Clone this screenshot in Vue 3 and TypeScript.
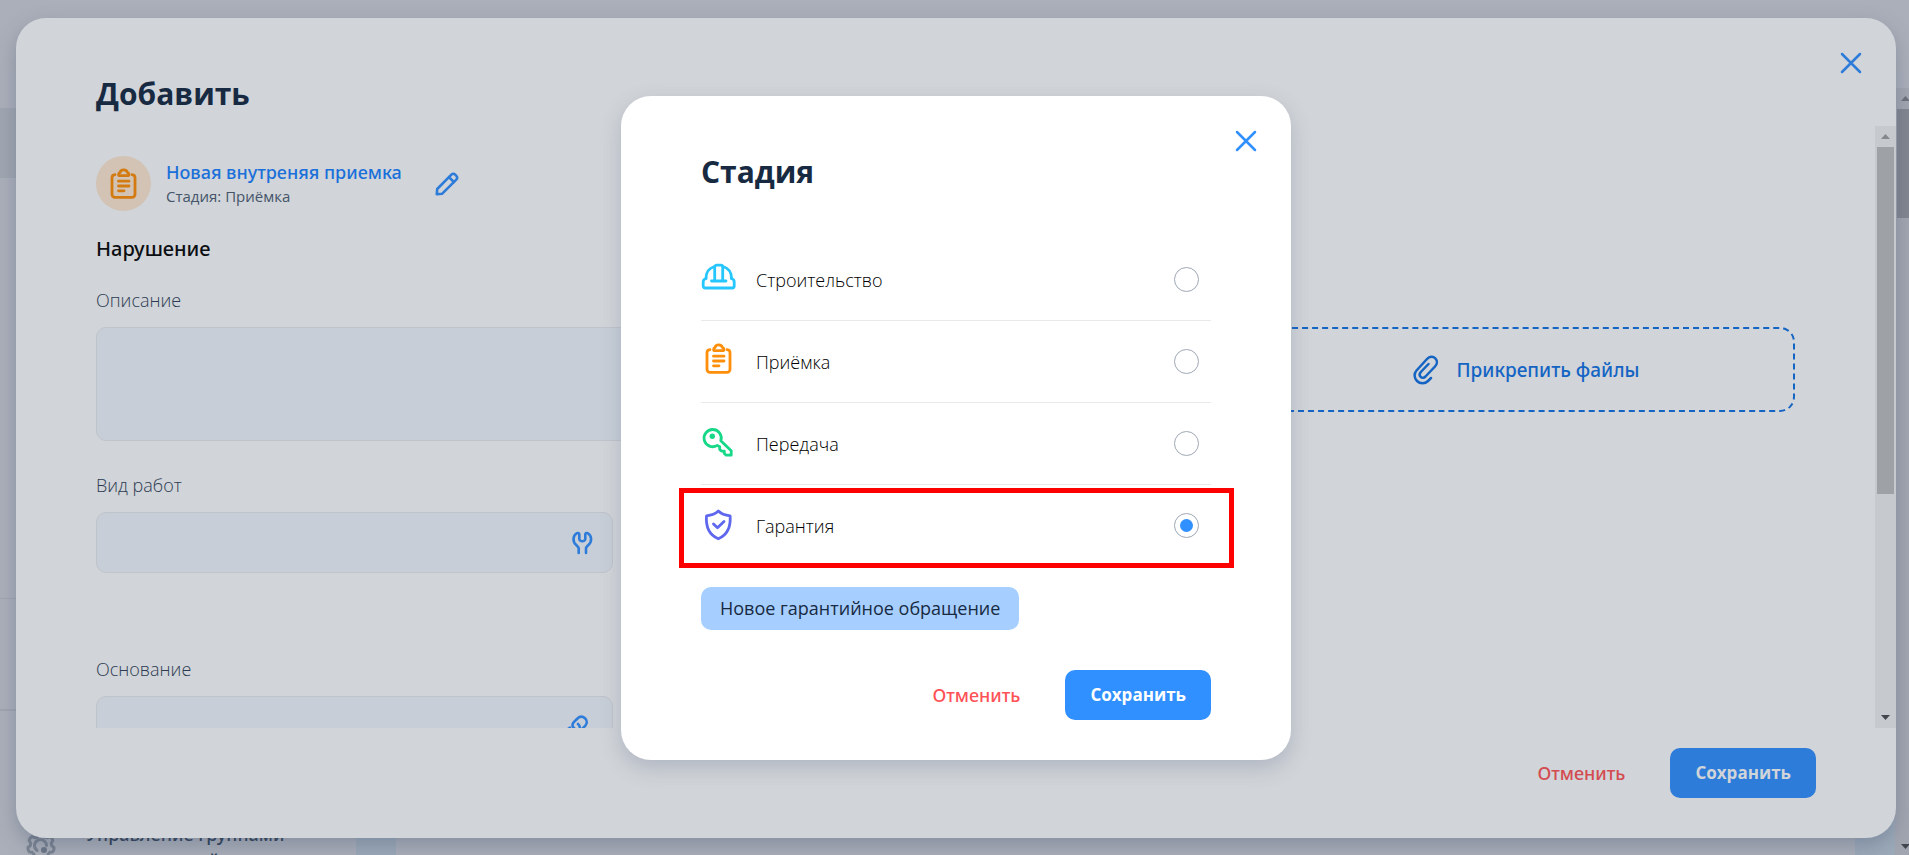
<script setup lang="ts">
import { ref } from 'vue'

interface Stage {
  id: string
  label: string
}

const stages: Stage[] = [
  { id: 'build', label: 'Строительство' },
  { id: 'accept', label: 'Приёмка' },
  { id: 'transfer', label: 'Передача' },
  { id: 'warranty', label: 'Гарантия' },
]

const selected = ref<string>('warranty')
const description = ref<string>('')
const workType = ref<string>('')
const basis = ref<string>('')
</script>

<template>
  <div class="page">
    <div class="backdrop-page">
      <div class="topbar"></div>
      <div class="workspace">
        <nav class="sidebar">
          <div class="side-active"></div>
          <div class="side-group"></div>
          <div class="side-group short"></div>
          <div class="side-item">
            <svg class="gear" viewBox="0 0 30 30" fill="none" stroke="#7a8391" stroke-width="3">
              <path d="M12.500 2.500c1.500-1 3.500-1 5 0l1 2.800 3 .4 2.600-1.200c1.500 1 2.500 2.500 2.700 4.200l-1.600 2.500.6 2.600 2.200 1.700c.2 1.700-.4 3.400-1.500 4.600l-2.800.2-1.800 2.300.3 2.800c-1.300 1.200-3 1.600-4.700 1.300L15 24.500l-2.500 2.200c-1.700.3-3.400-.1-4.700-1.300l.3-2.800-1.800-2.300-2.800-.2C2.400 18.900 1.800 17.200 2 15.500l2.200-1.700.6-2.600L3.200 8.700c.2-1.700 1.200-3.200 2.700-4.200l2.600 1.200 3-.4z" />
              <path d="M11 18.500a6 6 0 1 1 9.500-5" />
              <circle cx="18" cy="18" r="3" fill="#6c7687" stroke="none" />
            </svg>
            <span>Управление группами<br />пользователей</span>
          </div>
        </nav>
        <div class="board"></div>
        <div class="scrollbar page-scroll" aria-hidden="true">
          <i class="arrow up"></i>
          <div class="track"><div class="thumb small"></div></div>
          <i class="arrow down"></i>
        </div>
      </div>
    </div>

    <div class="layer">
      <section class="dialog main-dialog" role="dialog" aria-labelledby="add-title">
        <button class="close" type="button" aria-label="Закрыть">
          <svg viewBox="0 0 22 22"><path d="M2 2l18 18M20 2L2 20" /></svg>
        </button>
        <h1 id="add-title" class="main-title">Добавить</h1>

        <div class="scroll-area">
          <form class="form" @submit.prevent>
            <div class="subject">
              <span class="subject-badge">
                <svg viewBox="0 0 36 36" class="stroke">
                  <path d="M9 8.700c-2 .2-3 1.200-3 3v16.600a3 3 0 0 0 3 3h17a3 3 0 0 0 3-3V11.700c0-1.800-1-2.800-3-3" />
                  <path d="M14 9.700h7.500c.9 0 1.400-.5 1.400-1.300 0-1-.6-1.700-1.500-1.900-.4-1.600-1.800-2.600-3.700-2.600s-3.300 1-3.600 2.600c-.9.2-1.500.9-1.500 1.900 0 .8.5 1.300 1.400 1.300z" />
                  <path d="M12.500 15.200H23M12.500 20H23M12.500 24.800H18" />
                </svg>
              </span>
              <div class="subject-text">
                <a href="#" class="subject-link">Новая внутреняя приемка</a>
                <span class="subject-stage">Стадия: Приёмка</span>
              </div>
              <button class="edit" type="button" aria-label="Изменить">
                <svg viewBox="0 0 24 24">
                  <path d="M1.800 22.200L2.200 17 16.400 2.700c1.200-1.200 2.600-1.200 3.800 0l1.100 1.100c1.200 1.200 1.200 2.600 0 3.800L7 21.800z" />
                  <path d="M14 5.200l4.800 4.800" />
                </svg>
              </button>
            </div>

            <h2 class="section-title">Нарушение</h2>

            <div class="fields">
              <div class="field wide">
                <label for="description">Описание</label>
                <textarea id="description" v-model="description" class="box area"></textarea>
              </div>
              <button class="attach" type="button">
                <svg viewBox="0 0 26 30">
                  <path d="M18 23l-3 3c-3 3-8 3-11 0s-3.200-7.500-.5-10.500L14 4c2.500-2.700 6-3 8.300-.7s2 5.700-.3 8.200L12.500 21.500c-1.500 1.500-3.500 1.700-4.900.3-1.300-1.300-1.100-3.300.2-4.800L15.500 9" />
                </svg>
                Прикрепить файлы
              </button>
            </div>

            <div class="fields second">
              <div class="field">
                <label for="work-type">Вид работ</label>
                <div class="box with-icon">
                  <input id="work-type" v-model="workType" type="text" />
                  <svg viewBox="0 0 24 24">
                    <path d="M8.700 22v-4.500c0-1.500-1.200-2.300-2.700-3.700C2.500 10.500 2.600 4.500 7 2.200c1.200-.6 2.300 0 2.300 1.300V8c0 1 1.200 2.200 3 2.200s3-1.200 3-2.200V3.500c0-1.300 1.100-1.900 2.300-1.300 4.400 2.300 4.500 8.300 1 11.600C17.200 15.200 16 16 16 17.500V22" />
                  </svg>
                </div>
              </div>
            </div>

            <div class="fields third">
              <div class="field">
                <label for="basis">Основание</label>
                <div class="box with-icon link-box">
                  <input id="basis" v-model="basis" type="text" />
                  <svg viewBox="0 0 24 24">
                    <path d="M8.500 13.500C6 12 6 9 7.800 7.200l3.700-3.700c2.300-2.300 5.200-2.300 7.500-.2s2.300 5.200.2 7.500L15.500 14.500" />
                    <path d="M12 9c1.800 1.500 2.500 3.500 1.500 6.500l-4.500 5C7 22.500 4 22.500 2 20.500s-2-5 0-6.500l2-1.500" />
                  </svg>
                </div>
              </div>
            </div>
          </form>
          <div class="scrollbar" aria-hidden="true">
            <i class="arrow up"></i>
            <div class="track"><div class="thumb"></div></div>
            <i class="arrow down"></i>
          </div>
        </div>

        <footer class="actions main-actions">
          <button class="cancel" type="button">Отменить</button>
          <button class="save" type="button">Сохранить</button>
        </footer>
      </section>
    </div>

    <div class="layer">
      <section class="dialog stage-dialog" role="dialog" aria-labelledby="stage-title">
        <button class="close" type="button" aria-label="Закрыть">
          <svg viewBox="0 0 22 22"><path d="M2 2l18 18M20 2L2 20" /></svg>
        </button>
        <h2 id="stage-title" class="stage-title">Стадия</h2>

        <div class="stages">
          <label
            v-for="stage in stages"
            :key="stage.id"
            class="stage"
            :class="[stage.id, { marked: stage.id === 'warranty' }]"
          >
            <svg class="stroke" viewBox="0 0 36 36">
              <template v-if="stage.id === 'build'">
                <path d="M5 19.500C5 13 8.500 9 13.500 7.500M30.500 19.500C30.500 13 27 9 22 7.500" />
                <path d="M13.700 22V8.200a2 2 0 0 1 2-2h4a2 2 0 0 1 2 2V22M10.500 22h14.500" />
                <path d="M5 19.500c-2 .5-2.800 1.800-2.800 3.500v4a2 2 0 0 0 2 2h27a2 2 0 0 0 2-2v-4c0-1.700-.8-3-2.700-3.500" />
              </template>
              <template v-else-if="stage.id === 'accept'">
                <path d="M9 8.700c-2 .2-3 1.200-3 3v16.600a3 3 0 0 0 3 3h17a3 3 0 0 0 3-3V11.700c0-1.800-1-2.800-3-3" />
                <path d="M14 9.700h7.500c.9 0 1.400-.5 1.400-1.300 0-1-.6-1.700-1.500-1.900-.4-1.600-1.800-2.600-3.700-2.600s-3.300 1-3.600 2.600c-.9.2-1.500.9-1.500 1.900 0 .8.5 1.300 1.400 1.300z" />
                <path d="M12.500 15.200H23M12.500 20H23M12.500 24.800H18" />
              </template>
              <template v-else-if="stage.id === 'transfer'">
                <path d="M19.800 17.800l10.400 10v4.400h-5l-1.900-1.700v-2.300h-2.600l-2-1.800v-2.600l-2.500-1.400A8.600 8.600 0 1 1 19.800 17.800z" />
                <circle cx="11.300" cy="13.300" r="2.700" fill="currentColor" stroke="none" />
              </template>
              <template v-else>
                <path d="M17.300 6c-3.300 3.200-7.300 4.300-11.800 4.800C4.700 21 7.500 29.500 17.300 33.800 27 29.500 29.900 21 29.100 10.800 24.600 10.300 20.500 9.200 17.300 6z" />
                <path d="M12.500 19l4 3.700 6.500-6.200" />
              </template>
            </svg>
            <span class="stage-name">{{ stage.label }}</span>
            <input v-model="selected" type="radio" name="stage" :value="stage.id" />
          </label>
        </div>

        <span class="tag">Новое гарантийное обращение</span>

        <footer class="actions">
          <button class="cancel" type="button">Отменить</button>
          <button class="save" type="button">Сохранить</button>
        </footer>
      </section>
    </div>
  </div>
</template>

<style>
body {
  margin: 0;
  overflow: hidden;
}
</style>

<style scoped>
* {
  box-sizing: border-box;
}

.page {
  position: relative;
  height: 100vh;
  overflow: hidden;
  font-family: "Open Sans", "Noto Sans", sans-serif;
  font-size: 18px;
  line-height: 24px;
  background: #abafb9;
}

button,
input,
textarea {
  font: inherit;
  border: 0;
  padding: 0;
  margin: 0;
  background: none;
  outline: none;
}

button {
  cursor: pointer;
}

svg {
  display: block;
  flex: none;
  fill: none;
  stroke-linecap: round;
  stroke-linejoin: round;
}

/* Page behind the dialogs */
.backdrop-page {
  display: flex;
  flex-direction: column;
  height: 100%;
}

.topbar {
  height: 88px;
  flex: none;
}

.workspace {
  display: flex;
  flex: 1;
  min-height: 0;
  margin-right: -7px;
  background: #9daab9;
}

.sidebar {
  width: 356px;
  flex: none;
  padding-top: 20px;
  overflow: hidden;
  background: #abafb9;
}

.side-active {
  height: 70px;
  background: #a0a6b0;
}

.side-group {
  height: 421px;
  border-bottom: 1px solid #a0a4ae;
}

.side-group.short {
  height: 112px;
  border-bottom-width: 2px;
}

.side-item {
  display: flex;
  align-items: center;
  gap: 30px;
  margin-top: 110px;
  padding-left: 26px;
  line-height: 26px;
  font-family: "Noto Sans", sans-serif;
  font-weight: 500;
  color: #2f3f56;
}

.gear {
  width: 30px;
  height: 30px;
}

.board {
  flex: 1;
  margin: 0 40px;
  background: #abafb9;
}

/* Scroll bars */
.scrollbar {
  display: flex;
  flex-direction: column;
  width: 21px;
  flex: none;
  background: #c6c9cd;
}

.page-scroll {
  background: #a2a6b0;
}

.arrow {
  width: 9px;
  height: 5px;
  margin: 8px auto;
  background: #85888d;
}

.arrow.up {
  clip-path: polygon(50% 0, 100% 100%, 0 100%);
}

.arrow.down {
  background: #43474d;
  clip-path: polygon(0 0, 100% 0, 50% 100%);
}

.page-scroll .arrow.up {
  background: #6d717b;
}

.page-scroll .arrow.down {
  margin-bottom: 6px;
}

.track {
  flex: 1;
  padding: 0 2px;
}

.thumb {
  height: 62%;
  background: #9ea1a5;
}

.thumb.small {
  height: 15%;
  background: #828690;
}

/* Dialogs */
.layer {
  position: absolute;
  inset: 0;
  display: grid;
  grid-template-rows: minmax(0, 1fr);
  place-items: center;
  padding: 18px 13px 17px 16px;
}

.dialog {
  position: relative;
  display: flex;
  flex-direction: column;
  border-radius: 30px;
}

.main-dialog {
  width: 100%;
  height: 100%;
  background: #d1d4d8;
  box-shadow: 0 8px 20px rgba(70, 85, 115, 0.35);
}

.close {
  position: absolute;
  top: 34px;
  right: 34px;
  width: 22px;
  height: 22px;
  color: #3090ff;
}

.close svg {
  width: 22px;
  height: 22px;
  stroke: currentColor;
  stroke-width: 2.500;
}

.main-dialog .close {
  color: #2d7cda;
}

h1,
h2 {
  margin: 0;
  color: #172a42;
}

.main-title,
.stage-title {
  font-size: 30px;
  line-height: 40px;
  font-weight: 700;
}

.main-title {
  padding: 56px 80px 12px;
}

.scroll-area {
  display: flex;
  flex: 1;
  min-height: 0;
  overflow: hidden;
}

.form {
  flex: 1;
  min-width: 0;
  padding: 30px 80px 0;
}

.subject {
  display: flex;
  align-items: center;
  height: 55px;
}

.subject-badge {
  display: grid;
  place-items: center;
  width: 55px;
  height: 55px;
  border-radius: 50%;
  background: #d2c3b4;
  color: #d37a11;
}

.stroke {
  width: 36px;
  height: 36px;
  stroke: currentColor;
  stroke-width: 2.800;
}

.subject-text {
  display: flex;
  flex-direction: column;
  margin-left: 15px;
}

.subject-link {
  color: #1a70da;
  font-family: "Noto Sans", sans-serif;
  font-weight: 500;
  text-decoration: none;
}

.subject-stage {
  font-size: 15px;
  color: #44546a;
}

.edit {
  width: 24px;
  height: 24px;
  margin-left: 33px;
}

.edit svg,
.box svg {
  width: 24px;
  height: 24px;
  stroke: #2d7cda;
  stroke-width: 2.600;
}

.section-title {
  margin-top: 24px;
  font-family: "Noto Sans", sans-serif;
  font-size: 20px;
  line-height: 28px;
  font-weight: 500;
  color: #0b0e12;
}

.fields {
  display: grid;
  grid-template-columns: 517fr 564fr 538fr;
  column-gap: 40px;
  margin-top: 25px;
}

.second {
  margin-top: 32px;
}

.third {
  margin-top: 84px;
}

.field label {
  display: block;
  margin-bottom: 15px;
  color: #2c3b52;
  font-weight: 300;
}

.wide {
  grid-column: span 2;
}

.box {
  display: block;
  width: 100%;
  border: 1px solid #bfc4cb;
  border-radius: 10px;
  background: #c7ced7;
}

.area {
  height: 114px;
  resize: none;
}

.with-icon {
  display: flex;
  align-items: center;
  height: 61px;
  padding: 0 18px;
}

.link-box {
  padding-right: 22px;
}

.with-icon input {
  flex: 1;
  min-width: 0;
}

.attach {
  display: flex;
  align-items: center;
  justify-content: center;
  gap: 18px;
  height: 85px;
  margin-top: 39px;
  border: 2px dashed #1464c4;
  border-radius: 15px;
  color: #1464c4;
  font-family: "Noto Sans", sans-serif;
  font-size: 19px;
  font-weight: 500;
}

.attach svg {
  width: 26px;
  height: 30px;
  stroke: currentColor;
  stroke-width: 2.500;
}

.actions {
  display: flex;
  justify-content: flex-end;
  gap: 25px;
}

.main-actions {
  padding: 20px 80px 40px;
}

.cancel {
  padding: 0 20px;
  color: #ff5257;
  font-family: "Noto Sans", sans-serif;
  font-weight: 500;
}

.save {
  height: 50px;
  padding: 0 25px;
  border-radius: 10px;
  background: #3090ff;
  color: #fff;
  font-size: 17px;
  font-weight: 700;
}

.main-actions .cancel {
  color: #d44b51;
}

.main-actions .save {
  background: #2d7cda;
  color: #d1d4d8;
}

/* Stage picker */
.stage-dialog {
  width: 670px;
  max-width: 100%;
  padding: 56px 80px 40px;
  background: #fff;
  box-shadow: 0 8px 20px rgba(80, 95, 130, 0.25);
}

.stages {
  margin-top: 47px;
}

.stage {
  position: relative;
  display: flex;
  align-items: center;
  height: 82px;
  border-bottom: 1px solid #e8e9eb;
  cursor: pointer;
}

.stage:last-child {
  border-bottom-color: transparent;
}

.stage .stroke {
  margin-bottom: 6px;
}

.build .stroke {
  color: #26c6ff;
}

.accept .stroke {
  color: #ff8f0a;
}

.transfer .stroke {
  color: #17d888;
}

.warranty .stroke {
  color: #5f67ee;
}

.stage-name {
  flex: 1;
  margin-left: 19px;
  color: #000;
  font-weight: 300;
}

.stage input {
  appearance: none;
  display: grid;
  place-items: center;
  width: 25px;
  height: 25px;
  margin-right: 12px;
  border: 1px solid #9fa8b5;
  border-radius: 50%;
}

.stage input:checked::before {
  content: "";
  width: 13px;
  height: 13px;
  border-radius: 50%;
  background: #3090ff;
}

.marked::after {
  content: "";
  position: absolute;
  inset: 3px -23px -2px -22px;
  border: 5px solid #f00;
  pointer-events: none;
}

.tag {
  align-self: flex-start;
  margin: 20px 0 40px;
  padding: 9px 19px 10px;
  border-radius: 10px;
  background: #a6cfff;
  color: #172a42;
}
</style>
